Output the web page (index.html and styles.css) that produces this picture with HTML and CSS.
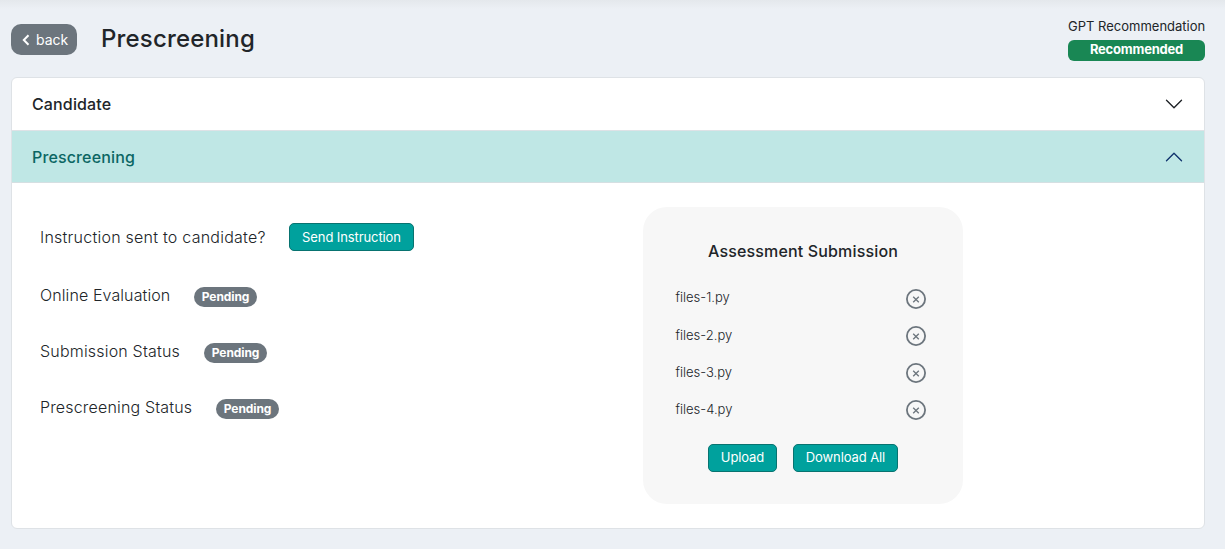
FILE: index.html
```html
<!DOCTYPE html>
<html lang="en">
<head>
<meta charset="utf-8">
<title>Prescreening</title>
<link rel="stylesheet" href="styles.css">
</head>
<body>
<header class="page-header">
  <button class="back"><svg width="8" height="12" viewBox="0 0 8 12"><path d="M6.5 1.2 1.8 6l4.7 4.8"/></svg><span>back</span></button>
  <h1 class="title">Prescreening</h1>
  <div class="recommendation">
    <div class="rec-label">GPT Recommendation</div>
    <div class="rec-badge">Recommended</div>
  </div>
</header>
<main class="accordion">
  <div class="acc-head"><span>Candidate</span><svg class="chevron" viewBox="0 0 16 16"><path d="m2 5 6 6 6-6"/></svg></div>
  <div class="acc-head open"><span>Prescreening</span><svg class="chevron" viewBox="0 0 16 16"><path d="m2 11 6-6 6 6"/></svg></div>
  <div class="acc-body">
    <section class="statuses">
      <div class="status first"><span class="label instruction">Instruction sent to candidate?</span><button class="btn send">Send Instruction</button></div>
      <div class="status"><span class="label online">Online Evaluation</span><span class="pill">Pending</span></div>
      <div class="status"><span class="label submission">Submission Status</span><span class="pill">Pending</span></div>
      <div class="status"><span class="label prescreen">Prescreening Status</span><span class="pill">Pending</span></div>
    </section>
    <section class="card">
      <h2 class="card-title">Assessment Submission</h2>
      <ul class="files">
        <li class="file"><span>files-1.py</span><svg class="remove" viewBox="0 0 20 20"><circle cx="10" cy="10" r="9.1"/><path d="m7.2 7.7 5.6 5.6m0-5.6-5.6 5.6"/></svg></li>
        <li class="file"><span>files-2.py</span><svg class="remove" viewBox="0 0 20 20"><circle cx="10" cy="10" r="9.1"/><path d="m7.2 7.7 5.6 5.6m0-5.6-5.6 5.6"/></svg></li>
        <li class="file"><span>files-3.py</span><svg class="remove" viewBox="0 0 20 20"><circle cx="10" cy="10" r="9.1"/><path d="m7.2 7.7 5.6 5.6m0-5.6-5.6 5.6"/></svg></li>
        <li class="file"><span>files-4.py</span><svg class="remove" viewBox="0 0 20 20"><circle cx="10" cy="10" r="9.1"/><path d="m7.2 7.7 5.6 5.6m0-5.6-5.6 5.6"/></svg></li>
      </ul>
      <div class="actions"><button class="btn upload">Upload</button><button class="btn download">Download All</button></div>
    </section>
  </div>
</main>
</body>
</html>
```
FILE: styles.css
```css
* { box-sizing: border-box; }
body {
  margin: 0;
  height: 549px;
  padding: 0 20px 20px 11px;
  overflow: hidden;
  background: linear-gradient(#e4e8ec, #ecf0f5 9px);
  color: #212529;
  font-family: Inter, sans-serif;
  font-size: 16px;
}
button { font-family: inherit; white-space: nowrap; }
.page-header { display: flex; height: 77px; align-items: flex-start; }
.back {
  display: flex;
  align-items: center;
  gap: 6px;
  width: 66px;
  height: 31px;
  margin-top: 24px;
  padding: 0 0 0 11px;
  border: 0;
  border-radius: 10px;
  background: #6c757d;
  color: #fff;
  font-size: 14px;
}
.back svg { fill: none; stroke: #fff; stroke-width: 2; }
.title {
  margin: 24px 0 0 24px;
  font-size: 24px;
  font-weight: 500;
  line-height: 29px;
  letter-spacing: 0.17px;
}
.recommendation { width: 137px; margin: 16px 0 0 auto; white-space: nowrap; }
.rec-label { font-size: 13px; line-height: 20px; text-align: right; }
.rec-badge {
  height: 21px;
  margin-top: 4px;
  border-radius: 6px;
  background: #198754;
  color: #fff;
  font-size: 13px;
  font-weight: 700;
  line-height: 19px;
  letter-spacing: -0.2px;
  text-align: center;
}
.accordion {
  height: 452px;
  border: 1px solid #dee2e6;
  border-radius: 6px;
  background: #fff;
  overflow: hidden;
}
.acc-head {
  display: flex;
  align-items: center;
  justify-content: space-between;
  height: 52px;
  padding: 0 20px;
  font-weight: 500;
  letter-spacing: 0.14px;
}
.acc-head.open {
  height: 53px;
  border-top: 1px solid #dee2e6;
  border-bottom: 1px solid #d5dfe2;
  background: #bfe7e5;
  color: #0b6663;
}
.chevron { width: 20px; height: 20px; fill: none; stroke: #212529; stroke-width: 1.1; stroke-linecap: round; stroke-linejoin: round; }
.open .chevron { stroke: #12356e; }
.acc-body { display: flex; padding: 24px 28px; }
.statuses { width: 603px; }
.status { display: flex; align-items: center; gap: 24px; height: 56px; }
.status.first { height: 60px; }
.label { font-weight: 300; white-space: nowrap; }
.instruction { width: 225px; letter-spacing: 0.24px; }
.online { width: 130px; letter-spacing: 0.1px; }
.submission { width: 140px; letter-spacing: 0.19px; }
.prescreen { width: 152px; letter-spacing: 0.17px; }
.pill {
  width: 63px;
  height: 20px;
  margin-top: 3px;
  border-radius: 10px;
  background: #6c757d;
  color: #fff;
  font-size: 12px;
  font-weight: 700;
  line-height: 20px;
  letter-spacing: -0.1px;
  text-align: center;
}
.btn {
  height: 28px;
  padding: 0;
  border: 1px solid #087370;
  border-radius: 5px;
  background: #00a19d;
  color: #fff;
  font-size: 13px;
  letter-spacing: -0.1px;
}
.send { width: 125px; }
.card {
  width: 320px;
  height: 297px;
  padding: 34px 37px 0 32px;
  border-radius: 24px;
  background: #f7f7f7;
}
.card-title {
  margin: 0 -5px 0 0;
  font-size: 16px;
  font-weight: 500;
  line-height: 20px;
  letter-spacing: 0.16px;
  text-align: center;
}
.files { margin: 19px 0 0; padding: 0; list-style: none; }
.file {
  display: flex;
  align-items: center;
  justify-content: space-between;
  height: 37px;
  font-size: 13px;
  font-weight: 300;
}
.file span { margin: -2px 0 0 0.5px; }
.file:first-child span { margin-top: -4px; }
.remove { width: 20px; height: 20px; margin-top: 1px; fill: none; stroke: #6c757d; stroke-width: 1.8; }
.remove path { stroke-width: 1.3; }
.actions { display: flex; gap: 16px; margin: 16px 0 0 33px; }
.actions .btn { padding-bottom: 2px; }
.upload { width: 69px; }
.download { width: 105px; }
```
